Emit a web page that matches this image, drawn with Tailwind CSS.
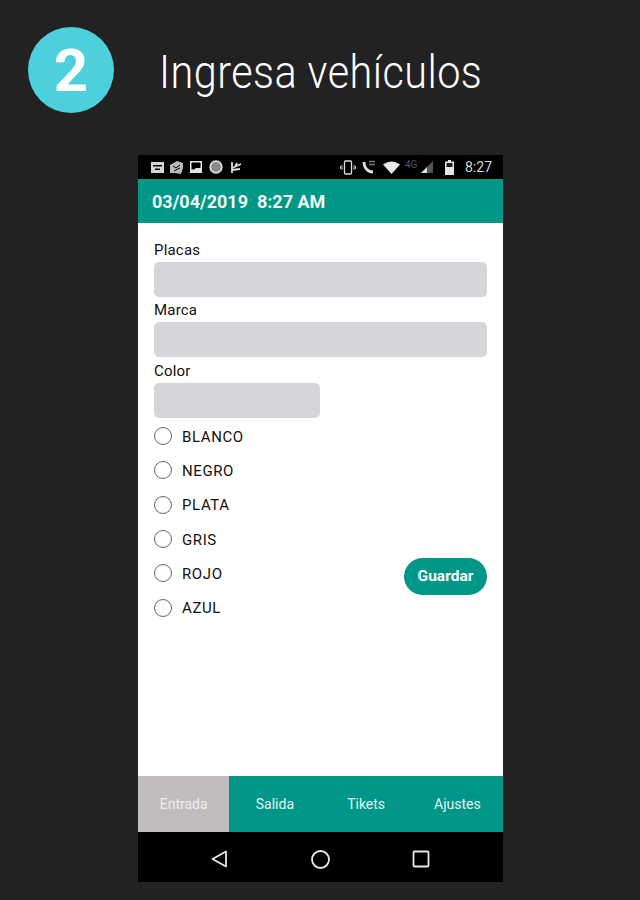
<!DOCTYPE html>
<html lang="en">
  <head>
    <meta charset="UTF-8" />
    <title>Ingresa vehículos</title>
    <script src="https://cdn.jsdelivr.net/npm/@tailwindcss/browser@4"></script>
  </head>
  <body class="bg-[#222222] w-[640px] h-[900px] overflow-hidden font-['Roboto',sans-serif]">
    <!-- step heading -->
    <div class="flex items-center h-[155px] pb-[16px] pl-[28px]">
      <div class="w-[86px] h-[86px] rounded-full bg-[#4dd0dc] flex items-center justify-center text-white text-[60px] font-bold leading-none pt-[2px]">2</div>
      <h1 class="ml-[45px] pt-[4px] text-white text-[46px] font-light leading-none whitespace-nowrap origin-left [transform:scaleX(0.9)] tracking-[0.5px]">Ingresa vehículos</h1>
    </div>

    <!-- phone -->
    <div class="ml-[138px] w-[365px] h-[727px] flex flex-col">
      <div class="h-[24px] bg-black flex items-center justify-between pl-[13px] pr-[11px] text-[#d5d5d5]">
        <div class="flex items-center">
          <svg width="13" height="13" viewBox="0 0 13 13" fill="#d5d5d5"><path d="M0 1h13v11H0z"/><path d="M2 4h9v1.500H2zM4 7.500h5V9H4z" fill="#000"/></svg>
          <svg class="ml-[6px]" width="13" height="13" viewBox="0 0 13 13" fill="#bbb"><path d="M0 4l7-4 6 2v5l-2 6-6-1-5 0z"/><path d="M3 5l3 2 4-3M4 10l6-3" stroke="#000" fill="none"/></svg>
          <svg class="ml-[7px]" width="12" height="12" viewBox="0 0 12 12" fill="#e5e5e5"><path d="M0 0h12v12H0z"/><path d="M1.500 1.500h9v5.500H6L4 8.500H1.500z" fill="#000"/></svg>
          <svg class="ml-[7px]" width="14" height="14" viewBox="0 0 14 14"><circle cx="7" cy="7" r="5.800" fill="#888" stroke="#ddd" stroke-width="1.800"/></svg>
          <svg class="ml-[7px]" width="12" height="13" viewBox="0 0 12 13" fill="none" stroke="#ddd" stroke-width="1.800"><path d="M2 1v11M2 7l9-4M2 9l8-1M5 6l2-4"/></svg>
        </div>
        <div class="flex items-center">
          <svg width="16" height="15" viewBox="0 0 16 15" fill="none" stroke="#ddd" stroke-width="1.300"><rect x="4.500" y="1" width="7" height="13" rx="1"/><path d="M2 5v5M14 5v5M0.500 6v3M15.500 6v3" stroke-width="0.900"/></svg>
          <svg class="ml-[6px]" width="14" height="14" viewBox="0 0 14 14" fill="none" stroke="#ddd"><path d="M2 2c0 6 4 10 9 10" stroke-width="2.800"/><path d="M7 1.500h6M7 4.500h6" stroke="#777" stroke-width="1.300"/></svg>
          <svg class="ml-[7px]" width="17" height="13" viewBox="0 0 17 13" fill="#e8e8e8"><path d="M0 3.500Q8.500 -2.500 17 3.500L8.500 13z"/></svg>
          <span class="ml-[5px] mb-[5px] w-[15px] text-[10px] leading-none text-[#555]">4G</span>
          <svg class="ml-[1px]" width="12" height="12" viewBox="0 0 12 12"><path d="M0 12L12 0v12z" fill="#555"/><path d="M0 12l6-6v6z" fill="#ddd"/></svg>
          <svg class="ml-[12px]" width="9" height="15" viewBox="0 0 9 15" fill="#e5e5e5"><path d="M3 0h3v1.500h3V15H0V1.500h3z"/><path d="M1.500 3h6v4h-6z" fill="#222"/></svg>
          <span class="ml-[11px] text-[14px] leading-none">8:27</span>
        </div>
      </div>

      <div class="h-[44px] bg-[#009688] flex items-center pl-[14px] text-[#eef8f7] text-[18px] font-bold whitespace-pre">03/04/2019  8:27 AM</div>

      <div class="h-[553px] bg-white flex flex-col px-[16px] pt-[18px] text-[#111]">
        <label class="block text-[15px] tracking-[0.2px] leading-[18px] h-[21px]">Placas</label>
        <div class="h-[35px] w-[333px] bg-[#d6d6da] rounded-[5px]"></div>
        <label class="block text-[15px] tracking-[0.2px] leading-[18px] h-[25px] pt-[4px]">Marca</label>
        <div class="h-[35px] w-[333px] bg-[#d6d6da] rounded-[5px]"></div>
        <label class="block text-[15px] tracking-[0.2px] leading-[18px] h-[26px] pt-[5px]">Color</label>
        <div class="h-[35px] w-[166px] bg-[#d6d6da] rounded-[5px]"></div>

        <div class="flex justify-between items-end w-[333px] mt-[1px]">
          <div class="flex flex-col">
            <div class="flex items-center h-[34.300px] gap-[10px]"><span class="w-[18px] h-[18px] rounded-full border-[1.500px] border-[#666]"></span><span class="text-[15px] tracking-[0.6px] pt-[2px]">BLANCO</span></div>
            <div class="flex items-center h-[34.300px] gap-[10px]"><span class="w-[18px] h-[18px] rounded-full border-[1.500px] border-[#666]"></span><span class="text-[15px] tracking-[0.6px] pt-[2px]">NEGRO</span></div>
            <div class="flex items-center h-[34.300px] gap-[10px]"><span class="w-[18px] h-[18px] rounded-full border-[1.500px] border-[#666]"></span><span class="text-[15px] tracking-[0.6px] pt-[2px]">PLATA</span></div>
            <div class="flex items-center h-[34.300px] gap-[10px]"><span class="w-[18px] h-[18px] rounded-full border-[1.500px] border-[#666]"></span><span class="text-[15px] tracking-[0.6px] pt-[2px]">GRIS</span></div>
            <div class="flex items-center h-[34.300px] gap-[10px]"><span class="w-[18px] h-[18px] rounded-full border-[1.500px] border-[#666]"></span><span class="text-[15px] tracking-[0.6px] pt-[2px]">ROJO</span></div>
            <div class="flex items-center h-[34.300px] gap-[10px]"><span class="w-[18px] h-[18px] rounded-full border-[1.500px] border-[#666]"></span><span class="text-[15px] tracking-[0.6px] pt-[2px]">AZUL</span></div>
          </div>
          <button class="w-[83px] h-[37px] mb-[30px] rounded-full bg-[#009688] text-white text-[15.500px] font-bold">Guardar</button>
        </div>
      </div>

      <div class="h-[56px] grid grid-cols-4 bg-[#009688] text-[#e4f3f1] text-[14px]">
        <div class="bg-[#c1bcbe] text-[#eeeeee] flex items-center justify-center">Entrada</div>
        <div class="flex items-center justify-center">Salida</div>
        <div class="flex items-center justify-center">Tikets</div>
        <div class="flex items-center justify-center">Ajustes</div>
      </div>

      <div class="h-[50px] pt-[4px] bg-black flex items-center pl-[72px] gap-[80px]">
        <svg width="20" height="20" viewBox="0 0 20 20" fill="none" stroke="#e8e8e8" stroke-width="1.800" stroke-linejoin="round"><path d="M16 2.500v15L2.500 10z"/></svg>
        <svg width="21" height="21" viewBox="0 0 21 21" fill="none" stroke="#e8e8e8" stroke-width="1.800"><circle cx="10.500" cy="10.500" r="8.500"/></svg>
        <svg class="ml-[1px]" width="18" height="18" viewBox="0 0 18 18" fill="none" stroke="#e8e8e8" stroke-width="1.800" stroke-linejoin="round"><rect x="1.500" y="1.500" width="15" height="15" rx="1"/></svg>
      </div>
    </div>
  </body>
</html>
